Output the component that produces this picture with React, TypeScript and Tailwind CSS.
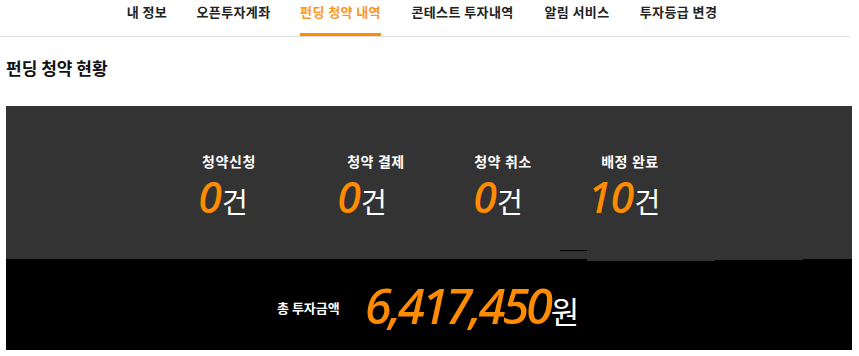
import React from 'react';

const tabs = [
  { t: '내 정보', w: 'w-[40px]' },
  { t: '오픈투자계좌', w: 'w-[73px]' },
  { t: '펀딩 청약 내역', w: 'w-[81px]' },
  { t: '콘테스트 투자내역', w: 'w-[103px]' },
  { t: '알림 서비스', w: 'w-[66px]' },
  { t: '투자등급 변경', w: 'w-[77px]' },
];

const stats = [
  { label: '청약신청', count: 0, cls: 'ml-[173px]', numCls: 'mr-[12px]' },
  { label: '청약 결제', count: 0, cls: 'ml-[47px]', numCls: 'mr-[28px]' },
  { label: '청약 취소', count: 0, cls: 'ml-[27px]', numCls: 'mr-[10px]' },
  { label: '배정 완료', count: 10, cls: 'ml-[27px]', numCls: 'mr-[12px]' },
];

const kr = "font-['Noto_Sans_CJK_KR',sans-serif]";
const num = "font-['Noto_Sans','Noto_Sans_CJK_KR',sans-serif]";

export default function App() {
  return (
    <div className={`w-[859px] h-[356px] bg-white overflow-hidden ${kr}`}>
      {/* tab nav */}
      <div className="w-[850px] h-[37px] border-b border-[#dddddd] flex pl-[127px] gap-[30px]">
        {tabs.map((tab, i) => (
          <div key={tab.t} className={`relative h-[36px] flex justify-center pt-[2px] ${tab.w}`}>
            <span
              className={`text-[13px] font-bold tracking-[0.4px] leading-[20px] whitespace-nowrap ${
                i === 2 ? 'text-[#ff9422]' : 'text-[#222222]'
              }`}
            >
              {tab.t}
            </span>
            {i === 2 && <div className="absolute left-0 right-0 bottom-0 h-[3px] bg-[#ff8c00]" />}
          </div>
        ))}
      </div>

      <h2 className="ml-[6px] mt-[20px] text-[17px] leading-[22px] font-bold text-[#111111]">펀딩 청약 현황</h2>

      {/* summary panel */}
      <div className="ml-[6px] mt-[27px] w-[846px]">
        <div className="relative h-[153px] bg-[#333333] flex pt-[47px]">
          {stats.map((s) => (
            <div key={s.label} className={`w-[100px] flex flex-col items-center ${s.cls}`}>
              <span className="text-[14px] font-bold text-white leading-[16px] tracking-[0.6px] whitespace-nowrap">{s.label}</span>
              <div className={`flex items-baseline mt-[7px] leading-[42px] ${s.numCls}`}>
                <span className={`${num} italic font-medium text-[43px] text-[#ff8c00] tracking-[-0.02em]`}>{s.count}</span>
                <span className="text-[28px] text-white ml-[1px]">건</span>
              </div>
            </div>
          ))}
          <div className="absolute left-[554px] top-[144px] w-[27px] h-px bg-black" />
          <div className="absolute left-[581px] top-[153px] w-[128px] h-[2px] bg-[#333333]" />
          <div className="absolute left-[709px] top-[153px] w-[88px] h-px bg-[#333333]" />
        </div>
        <div className="h-[91px] bg-black flex items-center pl-[271px] pt-[3px]">
          <span className="text-[13px] font-bold text-white mt-[4px]">총 투자금액</span>
          <div className="flex items-baseline ml-[25px]">
            <span className={`${num} italic font-medium text-[49px] leading-[54px] text-[#ff8c00] tracking-[-0.068em]`}>6,417,450</span>
            <span className="text-[31px] text-white ml-[1px]">원</span>
          </div>
        </div>
      </div>
    </div>
  );
}
